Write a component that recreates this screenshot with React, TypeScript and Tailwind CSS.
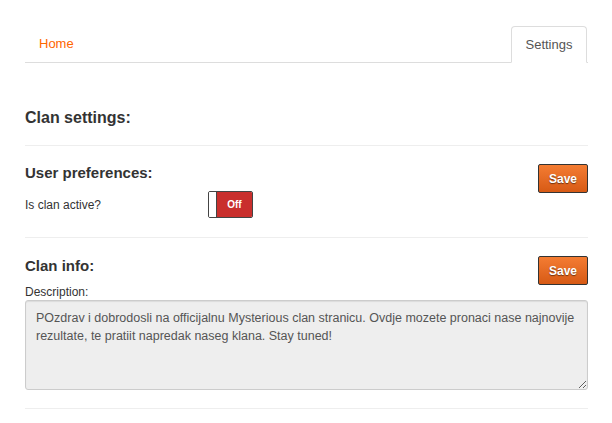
const App = () => {
  return (
    <div className="min-h-[423px] bg-white pl-[25px] pr-[24px] pt-[26px] text-[#333]" style={{ fontFamily: '"Liberation Sans", Arial, sans-serif' }}>
      <div className="flex items-end border-b border-[#ddd]">
        <a className="mb-[9px] ml-[14px] text-[13px] text-[#ff6600]" href="#">Home</a>
        <div className="mr-px ml-auto -mb-px flex h-[37px] w-[76px] items-center justify-center rounded-t-[4px] border border-b-white border-[#ddd] bg-white text-[13px] text-[#555]">
          Settings
        </div>
      </div>

      <h2 className="mt-[45px] text-[16px] font-bold leading-[20px] text-[#333]">Clan settings:</h2>
      <div className="mt-[17px] border-t border-[#eee]" />

      <div className="flex pt-[18px] pb-[19px]">
        <div className="flex-grow">
          <h3 className="text-[15px] font-bold leading-[18px] text-[#333]">User preferences:</h3>
          <div className="mt-[9px] flex items-center">
            <span className="w-[183px] text-[12px] text-[#333]">Is clan active?</span>
            <div className="flex h-[27px] w-[45px] overflow-hidden rounded-[2px] border border-[#444]">
              <div className="w-[8px] border-r border-[#444] bg-white" />
              <div className="flex flex-grow items-center justify-center bg-[#c92f2d] text-[10px] font-bold text-white">Off</div>
            </div>
          </div>
        </div>
        <button className="h-[29px] w-[50px] self-start rounded-[2px] border border-[#333] bg-gradient-to-b from-[#f47c32] to-[#d75a14] text-[12px] font-bold text-white [text-shadow:0_1px_1px_rgba(0,0,0,0.5)]">
          Save
        </button>
      </div>

      <div className="border-t border-[#eee]" />

      <div className="pt-[18px] pb-[18px]">
        <div className="flex">
          <div className="flex-grow">
            <h3 className="mt-[1px] text-[15px] font-bold leading-[18px] text-[#333]">Clan info:</h3>
            <div className="mt-[10px] text-[12px] leading-[14px] text-[#333]">Description:</div>
          </div>
          <button className="h-[29px] w-[50px] self-start rounded-[2px] border border-[#333] bg-gradient-to-b from-[#f47c32] to-[#d75a14] text-[12px] font-bold text-white [text-shadow:0_1px_1px_rgba(0,0,0,0.5)]">
            Save
          </button>
        </div>
        <textarea
          className="mt-[1px] block h-[90px] w-full rounded-[3px] border border-[#ccc] bg-[#eee] px-[10px] pt-[8px] text-[12.5px] leading-[18px] text-[#555] shadow-[inset_0_1px_1px_rgba(0,0,0,0.08)] outline-none"
          defaultValue="POzdrav i dobrodosli na officijalnu Mysterious clan stranicu. Ovdje mozete pronaci nase najnovije rezultate, te pratiit napredak naseg klana. Stay tuned!"
        />
      </div>

      <div className="border-t border-[#eee]" />
    </div>
  );
};

export default App;
